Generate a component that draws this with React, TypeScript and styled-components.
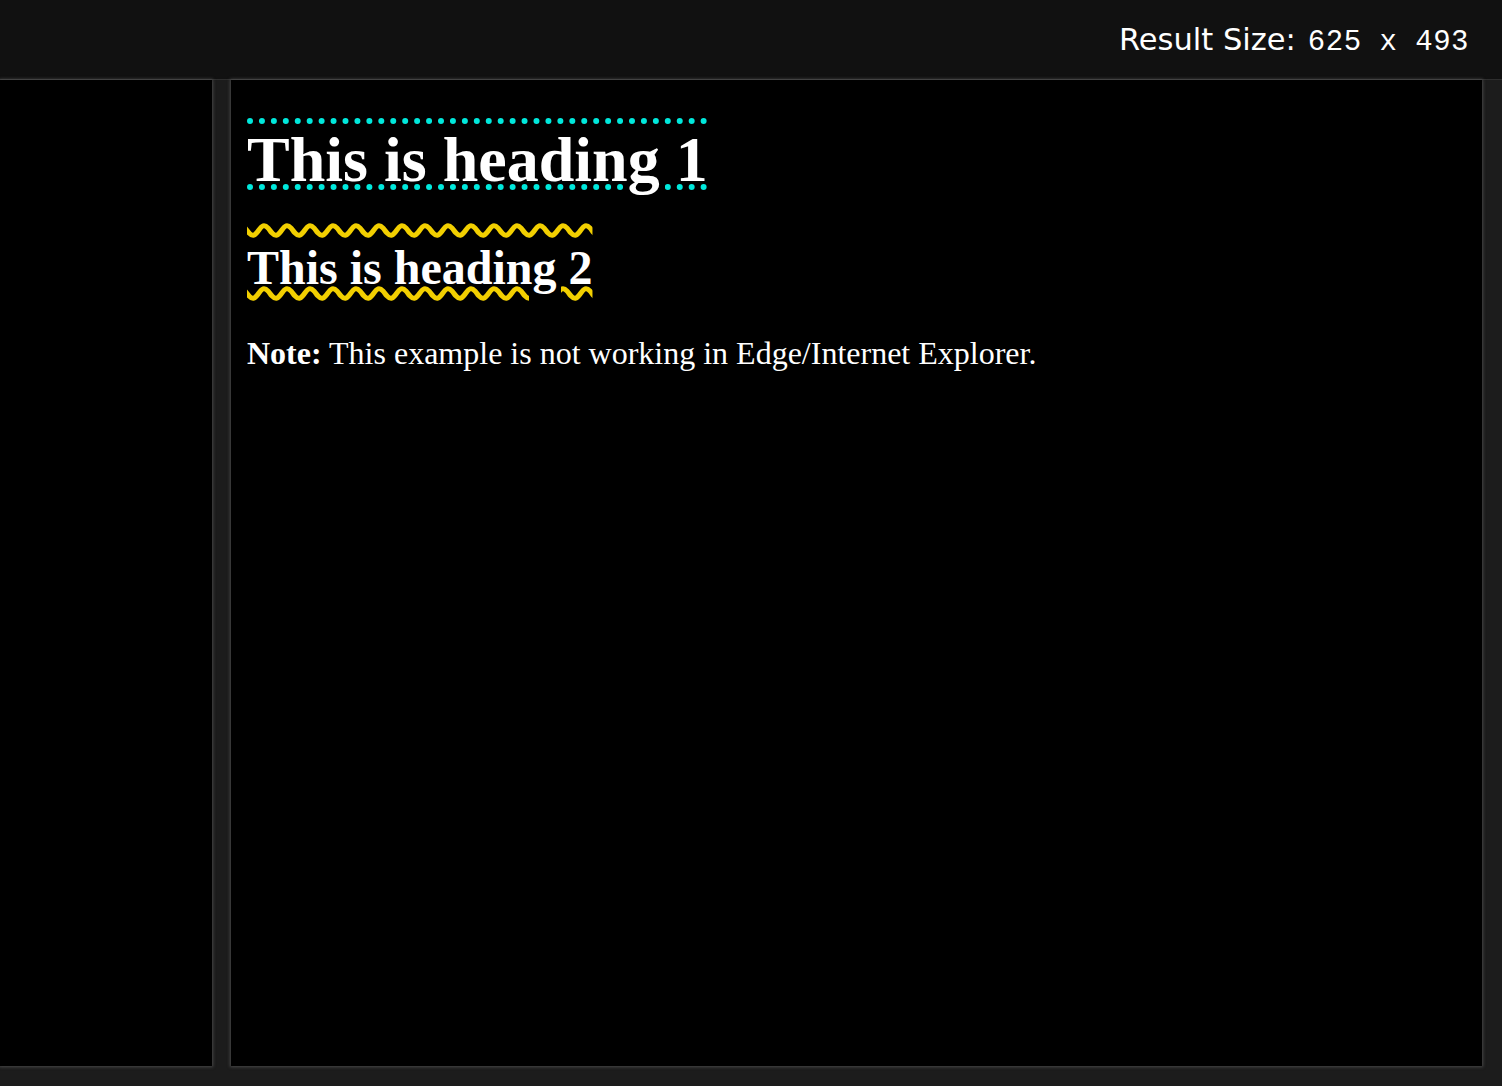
import React from "react";
import styled, { createGlobalStyle } from "styled-components";

const Global = createGlobalStyle`
  html, body { margin: 0; padding: 0; }
  body {
    background: #1c1c1c;
    width: 1502px;
    height: 1086px;
    overflow: hidden;
  }
`;

const Page = styled.div`
  display: flex;
  flex-direction: column;
  height: 1086px;
`;

const TopBar = styled.header`
  flex: none;
  height: 80px;
  box-sizing: border-box;
  background: #111111;
  border-bottom: 1px solid #2e2e2e;
  display: flex;
  align-items: center;
  justify-content: flex-end;
  padding-right: 33px;
`;

const SizeLabel = styled.div`
  color: #ffffff;
  font-family: "DejaVu Sans", Verdana, sans-serif;
  font-size: 30.5px;
  display: flex;
  align-items: baseline;
  gap: 12px;
  margin-top: 2px;
`;

const SizeValue = styled.span`
  font-family: "Liberation Mono", "Courier New", monospace;
  font-size: 29px;
  letter-spacing: 0.5px;
`;

const Main = styled.div`
  flex: 1;
  display: flex;
  gap: 19px;
  padding: 0 20px 20px 0;
  min-height: 0;
`;

const Panel = styled.div<{ $width?: number }>`
  background: #000000;
  ${(p) => (p.$width ? `width: ${p.$width}px; flex: none;` : "flex: 1;")}
  box-shadow: 0 0 3px 1px rgba(110, 110, 110, 0.55);
  overflow: hidden;
`;

const Result = styled.div`
  padding: 0 16px;
  display: flow-root;
  color: #ffffff;
  font-family: "Liberation Serif", "Times New Roman", serif;
`;

const H1 = styled.h1`
  font-size: 64px;
  font-weight: bold;
  margin: 43px 0;
  text-decoration-line: overline underline;
  text-decoration-style: dotted;
  text-decoration-color: #00e8dc;
  text-decoration-thickness: 6px;
`;

const H2 = styled.h2`
  font-size: 48px;
  font-weight: bold;
  margin: 40px 0;
  text-decoration-line: overline underline;
  text-decoration-style: wavy;
  text-decoration-color: #f2cf00;
  text-decoration-thickness: 5px;
`;

const Para = styled.p`
  font-size: 32px;
  margin: 32px 0;
`;

export default function App() {
  return (
    <>
      <Global />
      <Page>
        <TopBar>
          <SizeLabel>
            Result Size:<SizeValue>625 x 493</SizeValue>
          </SizeLabel>
        </TopBar>
        <Main>
          <Panel $width={212} />
          <Panel>
            <Result>
              <H1>This is heading 1</H1>
              <H2>This is heading 2</H2>
              <Para>
                <b>Note:</b> This example is not working in Edge/Internet Explorer.
              </Para>
            </Result>
          </Panel>
        </Main>
      </Page>
    </>
  );
}
